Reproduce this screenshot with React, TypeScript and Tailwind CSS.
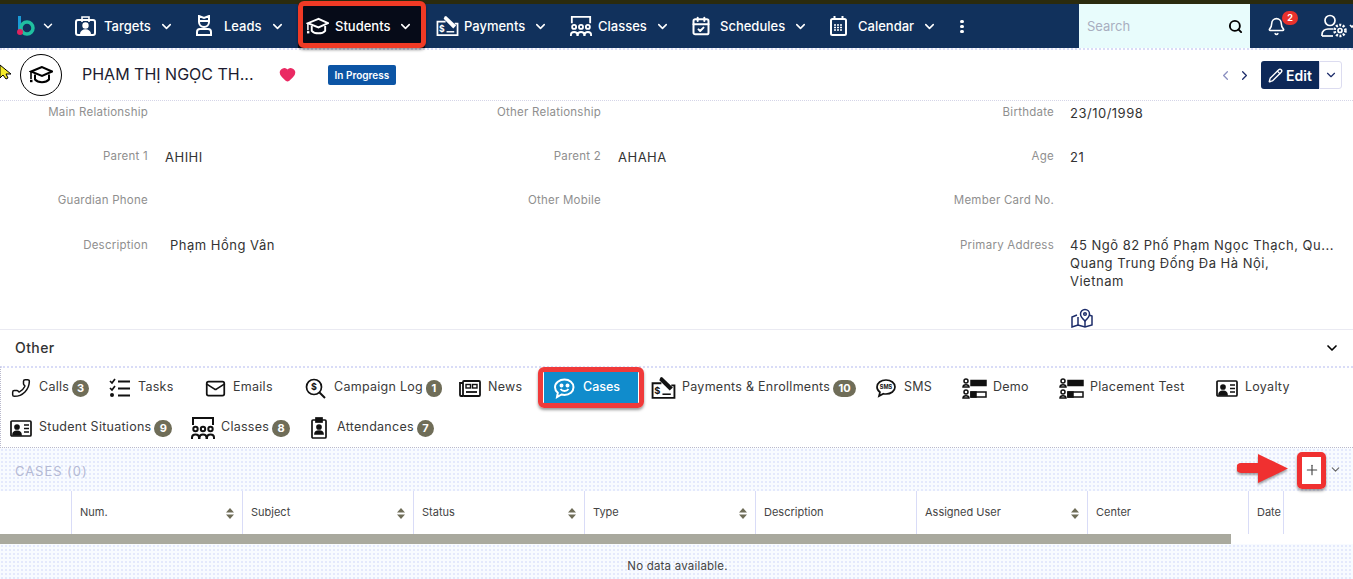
import {
  Bell,
  CalendarCheck,
  ChevronDown,
  ChevronLeft,
  ChevronRight,
  Heart,
  Mail,
  Pencil,
  Phone,
  Plus,
  Search,
} from "lucide-react";
import type { ReactNode } from "react";

const dots = "bg-[#f8fbff] bg-[radial-gradient(#e4e9fc_1px,transparent_1px)] bg-[length:4px_4px]";

function CapIcon({ size = 22 }: { size?: number }) {
  return (
    <svg width={size} height={size} viewBox="0 0 24 24" fill="none" stroke="currentColor" strokeWidth="2">
      <path d="M13 4L2 8.500l11 4.500 10-4.500z" />
      <path d="M6 11.500v5c3 3.500 11 3.500 14 0v-5" />
      <path d="M2 9v7" strokeWidth="1.600" />
      <path d="M1 18h2.500" strokeWidth="2.400" />
    </svg>
  );
}

function TargetIcon() {
  return (
    <svg width="21" height="22" viewBox="0 0 21 22" fill="none" stroke="currentColor" strokeWidth="2">
      <rect x="1" y="5" width="19" height="15" rx="2" />
      <path d="M7 7V2h7v5" strokeWidth="1.600" />
      <circle cx="10.500" cy="10.500" r="2.200" fill="currentColor" />
      <path d="M6 19c0-5 9-5 9 0z" fill="currentColor" />
    </svg>
  );
}

function LeadIcon() {
  return (
    <svg width="18" height="22" viewBox="0 0 18 22" fill="none" stroke="currentColor" strokeWidth="2">
      <path d="M4 1v6a5 5 0 0 0 10 0V1L9 3z" />
      <path d="M4 6h10" />
      <path d="M2 20v-3a3 3 0 0 1 3-3h8a3 3 0 0 1 3 3v3z" />
    </svg>
  );
}

function PaymentIcon({ size = 23 }: { size?: number }) {
  return (
    <svg width={size} height={size} viewBox="0 0 24 24" fill="none" stroke="currentColor" strokeWidth="1.800">
      <path d="M10 7H1.500v14h21V9h-3" />
      <path d="M9 1.500l1.500-.5L21 11l-3 3L8 4z" fill="currentColor" stroke="none" />
      <path d="M11 17.500h8" strokeWidth="1.500" />
      <text x="6" y="17.500" fontSize="9" fontWeight="700" textAnchor="middle" fill="currentColor" stroke="none" fontFamily="Inter, sans-serif">$</text>
    </svg>
  );
}

function GroupIcon({ size = 22 }: { size?: number }) {
  return (
    <svg width={size} height={size} viewBox="0 0 24 24" fill="none" stroke="currentColor" strokeWidth="2">
      <path d="M2 9V2h20v7" />
      <circle cx="4.500" cy="13" r="2.200" />
      <circle cx="12" cy="13" r="2.200" />
      <circle cx="19.500" cy="13" r="2.200" />
      <path d="M1 23v-1.500c0-4 7-4 7 0V23M8.500 23v-1.500c0-4 7-4 7 0V23M16 23v-1.500c0-4 7-4 7 0V23" />
    </svg>
  );
}

function CalendarGridIcon() {
  return (
    <svg width="17" height="20" viewBox="0 0 17 20" fill="none" stroke="currentColor" strokeWidth="2">
      <rect x="1" y="3" width="15" height="16" rx="1.500" />
      <path d="M4.500 0v4M12.500 0v4" />
      <path d="M4 9h9M4 11.500h9M4 14h9" strokeWidth="1.600" strokeDasharray="2 1" />
    </svg>
  );
}

function CaseIcon() {
  return (
    <svg width="21" height="21" viewBox="0 0 21 21" fill="none" stroke="currentColor" strokeWidth="2">
      <path d="M10.500 1.500c5 0 9 3.400 9 7.700s-4 7.700-9 7.700c-1 0-2-.1-3-.4L3 19l.8-4.200C2.300 13.400 1 11.500 1 9.200 1 4.900 5.500 1.500 10.500 1.500z" />
      <circle cx="7.500" cy="7.500" r="1" fill="currentColor" />
      <circle cx="13.500" cy="7.500" r="1" fill="currentColor" />
      <path d="M6.500 11c2 2.500 6 2.500 8 0" />
    </svg>
  );
}

function CampaignIcon() {
  return (
    <svg width="21" height="21" viewBox="0 0 21 21" fill="none" stroke="currentColor" strokeWidth="1.700">
      <circle cx="9" cy="9" r="7.500" />
      <path d="M14.500 14.500l5.500 5.500" strokeWidth="2" />
      <text x="9" y="12" fontSize="9" fontWeight="700" textAnchor="middle" fill="currentColor" stroke="none" fontFamily="Inter, sans-serif">$</text>
    </svg>
  );
}

function SmsIcon() {
  return (
    <svg width="20" height="20" viewBox="0 0 20 20" fill="none" stroke="currentColor" strokeWidth="1.700">
      <path d="M10 2c5 0 9 3 9 7s-4 7-9 7c-.9 0-1.800-.1-2.600-.3L3 18l1-3.800C2.200 13 1 11.100 1 9c0-4 4-7 9-7z" />
      <text x="10" y="11" fontSize="5.500" fontWeight="700" textAnchor="middle" fill="currentColor" stroke="none" fontFamily="Inter, sans-serif">SMS</text>
    </svg>
  );
}

function TasksIcon() {
  return (
    <svg width="21" height="20" viewBox="0 0 21 20" fill="none" stroke="currentColor" strokeWidth="2">
      <path d="M1 3l2 2 3-4M1 10l2 2 3-4" strokeWidth="1.700" />
      <circle cx="3" cy="17" r="2" fill="currentColor" stroke="none" />
      <path d="M9 3.500h12M9 10.500h12M9 17.500h12" />
    </svg>
  );
}

function NewsIcon() {
  return (
    <svg width="22" height="17" viewBox="0 0 22 17" fill="none" stroke="currentColor" strokeWidth="1.800">
      <rect x="4" y="1" width="17" height="15" rx="1" />
      <path d="M4 3H1v12c0 .6.400 1 1 1h2" />
      <rect x="7" y="4.500" width="4.500" height="3.500" strokeWidth="1.400" />
      <rect x="13.500" y="4.500" width="4.500" height="3.500" strokeWidth="1.400" />
      <path d="M7 12h11" strokeWidth="1.800" />
    </svg>
  );
}

function ServerUserIcon() {
  return (
    <svg width="25" height="21" viewBox="0 0 25 21" fill="none" stroke="currentColor" strokeWidth="1.500">
      <circle cx="4" cy="3" r="2" />
      <path d="M1 9c0-3 6-3 6 0z" />
      <circle cx="4" cy="14" r="2" />
      <path d="M1 20c0-3 6-3 6 0z" />
      <rect x="9" y="2.500" width="15" height="5" fill="currentColor" />
      <rect x="9" y="14" width="15" height="5" />
      <rect x="9" y="14" width="5" height="5" fill="currentColor" />
    </svg>
  );
}

function CardIcon() {
  return (
    <svg width="22" height="17" viewBox="0 0 22 17" fill="none" stroke="currentColor" strokeWidth="1.700">
      <rect x="1" y="1" width="20" height="15" rx="1" />
      <circle cx="7" cy="7" r="2" fill="currentColor" />
      <path d="M3 15c0-5 8-5 8 0z" fill="currentColor" />
      <path d="M14 5h5M14 8.500h5M14 12h5" strokeWidth="1.300" />
    </svg>
  );
}

function ClipboardUserIcon() {
  return (
    <svg width="16" height="22" viewBox="0 0 16 22" fill="none" stroke="currentColor" strokeWidth="1.700">
      <rect x="1" y="3" width="14" height="18" rx="1" />
      <rect x="5" y="1" width="6" height="4" fill="currentColor" />
      <circle cx="8" cy="10" r="2" fill="currentColor" />
      <path d="M4 17c0-4 8-4 8 0z" fill="currentColor" />
    </svg>
  );
}

function MapIcon() {
  return (
    <svg width="24" height="20" viewBox="0 0 24 20" fill="none" stroke="#1c2c6a" strokeWidth="1.500">
      <path d="M7 7L2 9v10l6-2 7 2 7-2V8l-3-1" />
      <path d="M8 9v8M15 13v6" />
      <path d="M15 1.500a4.500 4.500 0 0 0-4.500 4.500c0 3 4.500 7 4.500 7s4.500-4 4.500-7A4.500 4.500 0 0 0 15 1.500z" />
      <circle cx="15" cy="6" r="1.300" />
    </svg>
  );
}

function UserGearIcon() {
  return (
    <svg width="32" height="24" viewBox="0 0 32 24" fill="none" stroke="currentColor" strokeWidth="1.700">
      <circle cx="9" cy="6.500" r="5" />
      <path d="M1 22v-1.500c0-3.500 3-5.500 6-5.500h5" />
      <path d="M1 22h11" />
      <circle cx="19" cy="16.500" r="2" />
      <circle cx="19" cy="16.500" r="5.500" strokeWidth="2.600" strokeDasharray="2 1.500" />
      <path d="M29 11l2 2 2-2" />
    </svg>
  );
}

function NavItem({
  icon,
  label,
  width,
  iconBox,
  active,
}: {
  icon: ReactNode;
  label: string;
  width: string;
  iconBox: string;
  active?: boolean;
}) {
  return (
    <div className={`flex h-[44px] shrink-0 items-center text-white ${width} ${active ? "bg-[#060b18]" : ""}`}>
      <div className={`flex shrink-0 justify-start ${iconBox}`}>{icon}</div>
      <span className="pt-[1px] text-[13px] font-medium">{label}</span>
      <ChevronDown size={15} strokeWidth={2.500} className="ml-[8px] mt-[1px]" />
    </div>
  );
}

function Field({ label, value, gap = "ml-[17px]" }: { label: string; value?: ReactNode; gap?: string }) {
  return (
    <div className="flex items-start">
      <div className="w-[148px] shrink-0 text-right text-[11.5px] leading-[18px] tracking-[0.24px] text-[#8f8f8f]">{label}</div>
      <div className={`pt-[1px] text-[13px] leading-[18px] tracking-[0.5px] text-[#333] ${gap}`}>{value}</div>
    </div>
  );
}

function Badge({ n, w = "w-[17px]" }: { n: string; w?: string }) {
  return (
    <span className={`ml-[3px] flex h-[17px] items-center justify-center rounded-full bg-[#6f6d58] text-[11px] font-bold text-white ${w}`}>
      {n}
    </span>
  );
}

function Tab({
  icon,
  label,
  badge,
  width,
  iconBox,
  badgeWidth,
}: {
  icon: ReactNode;
  label: string;
  badge?: string;
  width: string;
  iconBox: string;
  badgeWidth?: string;
}) {
  return (
    <div className={`flex h-[40px] shrink-0 items-center text-[#111] ${width}`}>
      <div className={`flex shrink-0 justify-start ${iconBox}`}>{icon}</div>
      <span className="-mt-[2px] text-[12.5px] tracking-[0.27px] text-[#3a3a3a]">{label}</span>
      {badge && <Badge n={badge} w={badgeWidth} />}
    </div>
  );
}

function Th({ label, width, sort = true }: { label: string; width: string; sort?: boolean }) {
  return (
    <div className={`relative flex h-[43px] shrink-0 items-center border-r border-[#d9dcf7] pl-[8px] text-[11px] text-[#444] ${width}`}>
      {label}
      {sort && (
        <svg width="8" height="11" viewBox="0 0 8 11" className="absolute right-[8px] top-[17px]" fill="#6f6d58">
          <path d="M4 0l4 4.500H0zM4 11l4-4.500H0z" />
        </svg>
      )}
    </div>
  );
}

export default function App() {
  return (
    <div className="relative h-[579px] w-[1353px] overflow-hidden bg-white font-['Inter',sans-serif]">
      {/* Top bar */}
      <div className="h-[4px] bg-[#2b2b0e]" />
      <header className="flex h-[44px] items-center bg-[#11315c]">
        <div className="flex w-[75px] shrink-0 items-center pl-[16px] text-white">
          <svg width="20" height="22" viewBox="0 0 20 22" fill="none">
            <path d="M3.500 1v14" stroke="#1a9ad6" strokeWidth="3" />
            <circle cx="11" cy="13" r="6" stroke="#20c0a0" strokeWidth="3.500" />
            <circle cx="4" cy="17" r="3" fill="#e0245e" />
          </svg>
          <ChevronDown size={14} strokeWidth={2.500} className="ml-[5px]" />
        </div>
        <NavItem icon={<TargetIcon />} label="Targets" width="w-[120px]" iconBox="w-[29px]" />
        <NavItem icon={<LeadIcon />} label="Leads" width="w-[103px]" iconBox="w-[29px]" />
        <NavItem icon={<CapIcon size={23} />} label="Students" width="w-[127px] pl-[8px]" iconBox="w-[29px]" active />
        <div className="w-[11px] shrink-0" />
        <NavItem icon={<PaymentIcon />} label="Payments" width="w-[134px]" iconBox="w-[28px]" />
        <NavItem icon={<GroupIcon />} label="Classes" width="w-[121px]" iconBox="w-[28px]" />
        <NavItem icon={<CalendarCheck size={20} strokeWidth={2.400} />} label="Schedules" width="w-[139px]" iconBox="w-[29px]" />
        <NavItem icon={<CalendarGridIcon />} label="Calendar" width="w-[130px]" iconBox="w-[28px]" />
        <div className="flex w-[119px] shrink-0 flex-col items-start gap-[2px]">
          <span className="h-[3px] w-[4px] rounded-full bg-white" />
          <span className="h-[3px] w-[4px] rounded-full bg-white" />
          <span className="h-[3px] w-[4px] rounded-full bg-white" />
        </div>
        <div className="flex h-[44px] w-[171px] shrink-0 items-center justify-between bg-[#e8fcfc] pl-[8px] pr-[7px]">
          <span className="pt-[2px] text-[13px] text-[#a8aec0]">Search</span>
          <Search size={15} strokeWidth={3} className="text-black" />
        </div>
        <div className="relative ml-[17px] shrink-0 text-white">
          <Bell size={19} strokeWidth={2} />
          <span className="absolute -right-[12px] -top-[6px] flex h-[14px] w-[16px] items-center justify-center rounded-full bg-[#e8322d] text-[9px] font-bold">2</span>
        </div>
        <div className="ml-[35px] shrink-0 text-white">
          <UserGearIcon />
        </div>
      </header>

      {/* Record header */}
      <div className="flex h-[53px] items-center border-b border-t-2 border-dotted border-b-[#d5d5e8] border-t-[#d9dcf7]">
        <div className="ml-[20px] flex h-[42px] w-[42px] items-center justify-center rounded-full border border-black">
          <CapIcon size={24} />
        </div>
        <span className="ml-[20px] -mt-[2px] text-[16px] text-[#1c1c30]">PHẠM THỊ NGỌC TH...</span>
        <Heart size={17} fill="#ea2a63" stroke="#ea2a63" className="ml-[25px] -mt-[1px]" />
        <span className="ml-[32px] rounded-[2px] bg-[#0c55a5] px-[7px] py-[3px] text-[10px] font-semibold leading-[14px] text-white">In Progress</span>
        <div className="ml-auto flex items-center text-[#1c2c6a]">
          <ChevronLeft size={15} className="text-[#8a8fc0]" />
          <ChevronRight size={15} className="ml-[4px]" />
          <div className="ml-[9px] flex h-[28px] w-[58px] items-center justify-center gap-[3px] rounded-l-[3px] bg-[#0d2858] text-[14px] font-semibold text-white">
            <Pencil size={15} strokeWidth={2.200} />
            Edit
          </div>
          <div className="mr-[11px] flex h-[28px] w-[23px] items-center justify-center rounded-r-[3px] border border-[#dcdcf0]">
            <ChevronDown size={14} />
          </div>
        </div>
      </div>

      {/* Fields */}
      <div className="grid h-[229px] grid-cols-[453px_453px_447px] grid-rows-[44px_44px_45px_1fr] border-b border-[#eaeaf2] pt-[2px]">
        <Field label="Main Relationship" />
        <Field label="Other Relationship" />
        <Field label="Birthdate" gap="ml-[16px]" value="23/10/1998" />
        <Field label="Parent 1" value="AHIHI" />
        <Field label="Parent 2" value="AHAHA" />
        <Field label="Age" gap="ml-[16px]" value="21" />
        <Field label="Guardian Phone" />
        <Field label="Other Mobile" />
        <Field label="Member Card No." />
        <Field label="Description" gap="ml-[22px] -mt-[1px]" value="Phạm Hồng Vân" />
        <div />
        <Field
          label="Primary Address"
          gap="ml-[16px] -mt-[1px]"
          value={
            <div className="w-[270px]">
              <div className="whitespace-nowrap">45 Ngõ 82 Phố Phạm Ngọc Thạch, Qu...</div>
              <div>Quang Trung Đống Đa Hà Nội,</div>
              <div>Vietnam</div>
              <div className="mt-[18px]">
                <MapIcon />
              </div>
            </div>
          }
        />
      </div>

      {/* Other */}
      <div className="flex h-[36px] items-center justify-between pl-[15px] pr-[13px]">
        <span className="-mt-[2px] text-[14px] font-medium tracking-[0.4px] text-[#333]">Other</span>
        <ChevronDown size={16} strokeWidth={2.500} />
      </div>

      {/* Tabs */}
      <div className="h-[82px] border-b border-l border-t-2 border-dotted border-b-[#b9b9cc] border-l-[#b9b9cc] border-t-[#d9dcf7]">
        <div className="flex">
          <Tab icon={<Phone size={20} strokeWidth={1.800} className="-scale-x-100" />} label="Calls" badge="3" width="w-[108px]" iconBox="w-[38px] pl-[10px]" />
          <Tab icon={<TasksIcon />} label="Tasks" width="w-[96px]" iconBox="w-[29px]" />
          <Tab icon={<Mail size={21} strokeWidth={2} />} label="Emails" width="w-[100px]" iconBox="w-[28px]" />
          <Tab icon={<CampaignIcon />} label="Campaign Log" badge="1" badgeWidth="w-[16px]" width="w-[154px]" iconBox="w-[29px]" />
          <Tab icon={<NewsIcon />} label="News" width="w-[80px]" iconBox="w-[29px]" />
          <div className="flex h-[40px] w-[112px] shrink-0 items-center">
            <div className="ml-[5px] flex h-[38px] w-[94px] items-center bg-[#108ccc] pl-[10px] text-white">
              <CaseIcon />
              <span className="ml-[8px] -mt-[2px] text-[12.5px] font-medium">Cases</span>
            </div>
          </div>
          <Tab icon={<PaymentIcon size={25} />} label="Payments & Enrollments" badge="10" badgeWidth="w-[23px]" width="w-[225px]" iconBox="w-[31px]" />
          <Tab icon={<SmsIcon />} label="SMS" width="w-[86px]" iconBox="w-[28px]" />
          <Tab icon={<ServerUserIcon />} label="Demo" width="w-[97px]" iconBox="w-[31px]" />
          <Tab icon={<ServerUserIcon />} label="Placement Test" width="w-[157px]" iconBox="w-[31px]" />
          <Tab icon={<CardIcon />} label="Loyalty" width="w-[80px]" iconBox="w-[29px]" />
        </div>
        <div className="flex">
          <Tab icon={<CardIcon />} label="Student Situations" badge="9" badgeWidth="w-[18px]" width="w-[190px]" iconBox="w-[38px] pl-[9px]" />
          <Tab icon={<GroupIcon size={24} />} label="Classes" badge="8" badgeWidth="w-[18px]" width="w-[120px]" iconBox="w-[30px]" />
          <Tab icon={<ClipboardUserIcon />} label="Attendances" badge="7" width="w-[130px]" iconBox="w-[26px]" />
        </div>
      </div>

      {/* Cases panel */}
      <div className={`h-[131px] ${dots}`}>
        <div className="flex h-[43px] items-center justify-between pl-[15px] pr-[11px]">
          <span className="pt-[5px] text-[13px] tracking-[0.95px] text-[#b4b9d4]">CASES (0)</span>
          <div className="flex items-center">
            <div className="flex h-[29px] w-[21px] items-center justify-center bg-white">
              <Plus size={16} strokeWidth={1.700} className="text-[#444]" />
            </div>
            <ChevronDown size={13} className="ml-[7px] text-[#666]" />
          </div>
        </div>
        <div className="flex bg-white">
          <Th label="" width="w-[72px]" sort={false} />
          <Th label="Num." width="w-[171px]" />
          <Th label="Subject" width="w-[171px]" />
          <Th label="Status" width="w-[171px]" />
          <Th label="Type" width="w-[171px]" />
          <Th label="Description" width="w-[161px]" sort={false} />
          <Th label="Assigned User" width="w-[171px]" />
          <Th label="Center" width="w-[161px]" sort={false} />
          <Th label="Date" width="w-[35px]" sort={false} />
        </div>
        <div className="h-[10px] bg-white">
          <div className="h-[10px] w-[1231px] bg-[#a9a99e]" />
        </div>
        <div className="mt-[14px] pl-[2px] text-center text-[11.5px] tracking-[0.2px] text-[#444]">No data available.</div>
      </div>

      {/* Annotations */}
      <div className="absolute left-[298px] top-[1px] h-[47px] w-[128px] rounded-[6px] border-[5px] border-[#f03a25] shadow-[0_2px_3px_rgba(0,0,0,0.4)]" />
      <div className="absolute left-[538px] top-[367px] h-[41px] w-[106px] rounded-[6px] border-[5px] border-[#f03a3a] shadow-[0_2px_3px_rgba(0,0,0,0.4)]" />
      <div className="absolute left-[1297px] top-[452px] h-[37px] w-[29px] rounded-[5px] border-[5px] border-[#f03030] shadow-[0_2px_3px_rgba(0,0,0,0.4)]" />
      <svg className="absolute left-[1237px] top-[454px] drop-shadow-[0_2px_1px_rgba(0,0,0,0.35)]" width="52" height="30" viewBox="0 0 52 30">
        <path d="M4 9h17V0l30 14.500L21 29v-10H4a5 5 0 0 1 0-10z" fill="#f03030" />
      </svg>
      <svg className="absolute left-0 top-[64px]" width="12" height="18" viewBox="0 0 12 18">
        <path d="M0 1l11 9H6l2 4-2 1-3-4-3 3z" fill="#f5ec2a" stroke="#000" />
      </svg>
    </div>
  );
}
